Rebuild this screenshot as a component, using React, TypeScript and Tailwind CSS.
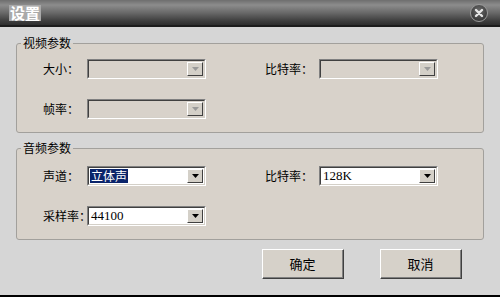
import React from 'react';

const cjk = "font-['Noto_Sans_CJK_SC','Noto_Sans',sans-serif]";

type ComboProps = { value?: string; selected?: boolean; disabled?: boolean };

const Combo: React.FC<ComboProps> = ({ value, selected, disabled }) => (
  <div className="w-[119px] h-[20px] flex border-t border-l border-[#808080] border-b-white border-r-white border-b border-r">
    <div
      className={`flex-1 flex border-t border-l border-[#404040] border-b border-r border-b-[#d4d0c8] border-r-[#d4d0c8] ${
        disabled ? 'bg-[#d8d2ca]' : 'bg-white'
      }`}
    >
      <div className="flex-1 flex items-center pl-[1px] overflow-hidden">
        {value && (
          <span
            className={`leading-[14px] px-[1px] ${
              selected ? `bg-[#0a246a] text-white text-[12px] ${cjk}` : "text-black text-[13px] font-['Liberation_Serif',serif]"
            }`}
          >
            {value}
          </span>
        )}
      </div>
      <div className="w-[16px] my-[1px] mr-[1px] flex items-center justify-center bg-[#d4d0c8] border-t border-l border-white border-b border-r border-b-[#404040] border-r-[#404040]">
        <svg width="7" height="4" viewBox="0 0 7 4">
          <path d="M0 0h7L3.5 4z" fill={disabled ? '#9a9a9a' : '#000'} />
        </svg>
      </div>
    </div>
  </div>
);

const Label: React.FC<{ text: string; w: string }> = ({ text, w }) => (
  <div className={`${w} text-[12px] leading-[14px] text-black whitespace-nowrap ${cjk}`}>{text}</div>
);

const Group: React.FC<{ title: string; className: string; children: React.ReactNode }> = ({ title, className, children }) => (
  <div className={`relative mx-[16px] border border-[#a2a09c] rounded-[3px] bg-[#d8d2ca] ${className}`}>
    <span
      className={`absolute left-[4px] top-[-8px] px-[2px] text-[12px] leading-[14px] text-black ${cjk} bg-[linear-gradient(to_bottom,#d6d6d6_50%,#d8d2ca_50%)]`}
    >
      {title}
    </span>
    {children}
  </div>
);

const Button: React.FC<{ text: string }> = ({ text }) => (
  <div className="w-[82px] h-[30px] border-t border-l border-white border-b border-r border-b-[#404040] border-r-[#404040] bg-[#d6d1c9]">
    <div className={`h-full flex items-center justify-center border-b border-r border-[#808080] border-t-0 border-l-0 text-[13px] text-black ${cjk}`}>
      {text}
    </div>
  </div>
);

export default function App() {
  return (
    <div className="w-[500px] h-[297px] bg-[#d6d6d6] flex flex-col overflow-hidden border-b-2 border-black">
      {/* Title bar */}
      <div className="h-[27px] flex items-center justify-between pl-[9px] pr-[12px] border-b-2 border-[#1c1c1c] bg-[linear-gradient(to_bottom,#6e6e6e_0%,#8c8c8c_20%,#6a6a6a_50%,#3c3c3c_85%,#2e2e2e_100%)]">
        <span className={`bg-[#a9a9a9] text-white font-bold text-[15px] leading-[16px] px-[1px] ${cjk}`}>设置</span>
        <div className="w-[18px] h-[18px] rounded-full border border-[#9a9a9a] bg-[radial-gradient(circle_at_50%_35%,#6a6a6a,#2a2a2a)] flex items-center justify-center">
          <svg width="10" height="10" viewBox="0 0 10 10">
            <path d="M2 2L8 8M8 2L2 8" stroke="#e6e6e6" strokeWidth="2.4" strokeLinecap="round" />
          </svg>
        </div>
      </div>

      {/* Video params */}
      <Group title="视频参数" className="mt-[16px] h-[90px] pt-[15px] pl-[26px]">
        <div className="flex flex-col gap-[20px]">
          <div className="flex items-center">
            <Label text="大小：" w="w-[44px]" />
            <Combo disabled />
            <div className="w-[59px]" />
            <Label text="比特率：" w="w-[54px]" />
            <Combo disabled />
          </div>
          <div className="flex items-center">
            <Label text="帧率：" w="w-[44px]" />
            <Combo disabled />
          </div>
        </div>
      </Group>

      {/* Audio params */}
      <Group title="音频参数" className="mt-[15px] h-[92px] pt-[17px] pl-[26px]">
        <div className="flex flex-col gap-[20px]">
          <div className="flex items-center">
            <Label text="声道：" w="w-[44px]" />
            <Combo value="立体声" selected />
            <div className="w-[59px]" />
            <Label text="比特率：" w="w-[54px]" />
            <Combo value="128K" />
          </div>
          <div className="flex items-center">
            <Label text="采样率：" w="w-[44px]" />
            <Combo value="44100" />
          </div>
        </div>
      </Group>

      {/* Buttons */}
      <div className="mt-[9px] flex justify-end gap-[36px] pr-[38px]">
        <Button text="确定" />
        <Button text="取消" />
      </div>
    </div>
  );
}
